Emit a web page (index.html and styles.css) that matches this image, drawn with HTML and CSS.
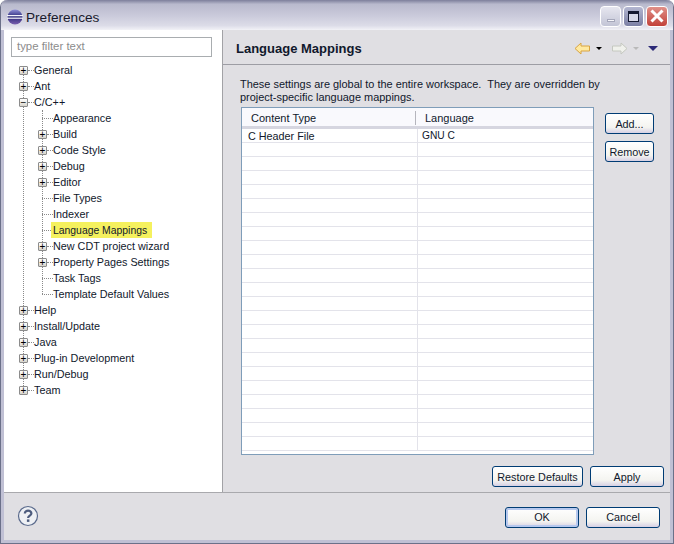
FILE: index.html
```html
<!DOCTYPE html>
<html lang="en">
<head>
<meta charset="utf-8">
<title>Preferences</title>
<link rel="stylesheet" href="styles.css">
</head>
<body>
<div class="window">
  <header class="titlebar">
    <svg class="app-icon" width="16" height="16" viewBox="0 0 16 16">
      <defs><linearGradient id="eg" x1="0" y1="0" x2="0" y2="1"><stop offset="0" stop-color="#8f8fd8"/><stop offset="0.5" stop-color="#2c2a78"/><stop offset="1" stop-color="#7a5fb0"/></linearGradient></defs>
      <circle cx="8" cy="8" r="7.5" fill="url(#eg)"/>
      <rect x="0" y="6" width="16" height="1.2" fill="#f4f4fb"/>
      <rect x="0" y="8.6" width="16" height="1.2" fill="#f4f4fb"/>
    </svg>
    <span class="title-text">Preferences</span>
    <div class="win-buttons">
      <div class="wb wb-min"><span class="min-bar"></span></div>
      <div class="wb wb-max"><span class="max-box"></span></div>
      <div class="wb wb-close">
        <svg width="16" height="16" viewBox="0 0 16 16"><path d="M2.5 2.5L13.5 13.5M13.5 2.5L2.5 13.5" stroke="#fff" stroke-width="3"/></svg>
      </div>
    </div>
  </header>
  <div class="main">
    <aside class="left">
      <div class="filter">type filter text</div>
      <ul class="tree">
        <li class="row"><span class="exp">+</span><span class="twig"></span><span class="lbl">General</span></li>
        <li class="row"><span class="exp">+</span><span class="twig"></span><span class="lbl">Ant</span></li>
        <li class="row"><span class="exp">−</span><span class="twig"></span><span class="lbl">C/C++</span></li>
        <li class="group">
          <ul class="sub">
            <li class="row"><span class="leaf"></span><span class="lbl">Appearance</span></li>
            <li class="row"><span class="exp">+</span><span class="twig"></span><span class="lbl">Build</span></li>
            <li class="row"><span class="exp">+</span><span class="twig"></span><span class="lbl">Code Style</span></li>
            <li class="row"><span class="exp">+</span><span class="twig"></span><span class="lbl">Debug</span></li>
            <li class="row"><span class="exp">+</span><span class="twig"></span><span class="lbl">Editor</span></li>
            <li class="row"><span class="leaf"></span><span class="lbl">File Types</span></li>
            <li class="row"><span class="leaf"></span><span class="lbl">Indexer</span></li>
            <li class="row"><span class="leaf"></span><span class="lbl sel">Language Mappings</span></li>
            <li class="row"><span class="exp">+</span><span class="twig"></span><span class="lbl">New CDT project wizard</span></li>
            <li class="row"><span class="exp">+</span><span class="twig"></span><span class="lbl">Property Pages Settings</span></li>
            <li class="row"><span class="leaf"></span><span class="lbl">Task Tags</span></li>
            <li class="row"><span class="leaf"></span><span class="lbl">Template Default Values</span></li>
          </ul>
        </li>
        <li class="row"><span class="exp">+</span><span class="twig"></span><span class="lbl">Help</span></li>
        <li class="row"><span class="exp">+</span><span class="twig"></span><span class="lbl">Install/Update</span></li>
        <li class="row"><span class="exp">+</span><span class="twig"></span><span class="lbl">Java</span></li>
        <li class="row"><span class="exp">+</span><span class="twig"></span><span class="lbl">Plug-in Development</span></li>
        <li class="row"><span class="exp">+</span><span class="twig"></span><span class="lbl">Run/Debug</span></li>
        <li class="row"><span class="exp">+</span><span class="twig"></span><span class="lbl">Team</span></li>
      </ul>
    </aside>
    <section class="right">
      <div class="page-head">
        <h1 class="page-title">Language Mappings</h1>
        <div class="nav">
          <svg width="17" height="13" viewBox="0 0 17 13"><path d="M1 6.5L7 1V4H15.5V9H7V12Z" fill="#ffe9a0" stroke="#d9a441"/></svg>
          <span class="tri tri-black"></span>
          <svg class="nav-fwd" width="17" height="13" viewBox="0 0 17 13"><path d="M16 6.5L10 1V4H1.5V9H10V12Z" fill="#f0f1ec" stroke="#c5c8c0"/></svg>
          <span class="tri tri-grey"></span>
          <span class="tri tri-menu"></span>
        </div>
      </div>
      <div class="page-body">
        <p class="desc">These settings are global to the entire workspace.&nbsp; They are overridden by<br>project-specific language mappings.</p>
        <div class="content">
          <div class="table">
            <div class="thead"><span class="th th1">Content Type</span><span class="th th2">Language</span></div>
            <div class="tr"><span class="td1">C Header File</span><span class="td2">GNU C</span></div>
            <div class="tr"><span class="td1"></span><span class="td2"></span></div>
            <div class="tr"><span class="td1"></span><span class="td2"></span></div>
            <div class="tr"><span class="td1"></span><span class="td2"></span></div>
            <div class="tr"><span class="td1"></span><span class="td2"></span></div>
            <div class="tr"><span class="td1"></span><span class="td2"></span></div>
            <div class="tr"><span class="td1"></span><span class="td2"></span></div>
            <div class="tr"><span class="td1"></span><span class="td2"></span></div>
            <div class="tr"><span class="td1"></span><span class="td2"></span></div>
            <div class="tr"><span class="td1"></span><span class="td2"></span></div>
            <div class="tr"><span class="td1"></span><span class="td2"></span></div>
            <div class="tr"><span class="td1"></span><span class="td2"></span></div>
            <div class="tr"><span class="td1"></span><span class="td2"></span></div>
            <div class="tr"><span class="td1"></span><span class="td2"></span></div>
            <div class="tr"><span class="td1"></span><span class="td2"></span></div>
            <div class="tr"><span class="td1"></span><span class="td2"></span></div>
            <div class="tr"><span class="td1"></span><span class="td2"></span></div>
            <div class="tr"><span class="td1"></span><span class="td2"></span></div>
            <div class="tr"><span class="td1"></span><span class="td2"></span></div>
            <div class="tr"><span class="td1"></span><span class="td2"></span></div>
            <div class="tr"><span class="td1"></span><span class="td2"></span></div>
            <div class="tr"><span class="td1"></span><span class="td2"></span></div>
            <div class="tr"><span class="td1"></span><span class="td2"></span></div>
          </div>
          <div class="side-btns">
            <button class="btn btn-side">Add...</button>
            <button class="btn btn-side">Remove</button>
          </div>
        </div>
        <div class="page-btns">
          <button class="btn btn-restore">Restore Defaults</button>
          <button class="btn btn-wide">Apply</button>
        </div>
      </div>
    </section>
  </div>
  <footer class="footer">
    <svg class="help" width="22" height="22" viewBox="0 0 22 22">
      <circle cx="11" cy="11" r="9.5" fill="#eef0f4" stroke="#5a6a8c" stroke-width="1.2"/>
      <path d="M7.8 8.4C7.8 4.8 14.4 4.8 14.4 8.4C14.4 10.6 11.1 10.6 11.1 13" fill="none" stroke="#4d5c7e" stroke-width="2.2"/>
      <rect x="9.9" y="14.4" width="2.5" height="2.5" fill="#4d5c7e"/>
    </svg>
    <div class="foot-btns">
      <button class="btn btn-wide btn-default">OK</button>
      <button class="btn btn-wide">Cancel</button>
    </div>
  </footer>
</div>
</body>
</html>
```
FILE: styles.css
```css
* { box-sizing: border-box; }
html, body { margin: 0; padding: 0; }
body { width: 674px; height: 544px; overflow: hidden; font-family: "Liberation Sans", Arial, sans-serif; font-size: 10.8px; color: #10182c; }
.window { width: 674px; height: 544px; display: flex; flex-direction: column; background: #e0dfe3; border: solid #6b7089; border-width: 0 1px 1px; box-shadow: inset 0 0 0 3px #c0c0d4; padding: 0 3px 3px; border-radius: 7px 7px 0 0; }
.titlebar { flex: none; height: 30px; margin: 0 -3px; padding: 3px 5px 0 6px; display: flex; align-items: center; gap: 1px; background: linear-gradient(#7d7f9b 0, #b9bacd 14%, #c9c9da 50%, #dcdce8 85%, #f2f2f7 100%); border-radius: 7px 7px 0 0; }
.app-icon { margin-right: 2px; }
.title-text { font-size: 13.6px; color: #1a1a2c; line-height: 28px; padding-top: 2px; }
.win-buttons { margin-left: auto; display: flex; gap: 2px; padding-bottom: 1px; }
.wb { width: 21px; height: 21px; border-radius: 4px; border: 1px solid #fff; display: flex; align-items: center; justify-content: center; }
.wb-min { background: linear-gradient(#e6e6ef, #c3c5d6); }
.min-bar { width: 8px; height: 3px; margin-top: 9px; background: #f7f7fb; border: 1px solid #a5a7ba; }
.wb-max { background: linear-gradient(#b3b6d0, #7b7fa4); }
.max-box { width: 11px; height: 11px; border: 1px solid #141830; border-top-width: 3px; background: #d7d8e8; }
.wb-close { background: linear-gradient(#e09088, #c2413a); width: 22px; }
.main { flex: 1; display: flex; min-height: 0; border-bottom: 1px solid #a9a9ad; }
.left { flex: none; width: 219px; background: #fff; border-right: 1px solid #a2a2a6; padding: 7px 0 0 7px; }
.filter { width: 201px; height: 20px; border: 1px solid #a9adb0; padding: 0 4px 0 5px; font-size: 11.4px; line-height: 17px; color: #8c8c8c; background: #fff; }
.tree, .sub { list-style: none; margin: 0; padding: 0; position: relative; }
.tree { margin: 5px 0 0 6px; }
.sub { padding-left: 19px; }
.tree::before { content: ""; position: absolute; left: 6px; top: 8px; bottom: 8px; border-left: 1px dotted #8a8a8a; }
.sub::before { content: ""; position: absolute; left: 25px; top: 0; bottom: 8px; border-left: 1px dotted #8a8a8a; }
.row { height: 16px; display: flex; align-items: center; }
.exp { flex: none; position: relative; width: 9px; height: 9px; margin-left: 2px; border: 1px solid #8c8c8c; border-radius: 1px; background: linear-gradient(#fff, #d8d5cc); font-size: 10px; line-height: 7px; text-align: center; color: #000; overflow: hidden; }
.twig { flex: none; width: 6px; border-top: 1px dotted #8a8a8a; }
.leaf { flex: none; width: 11px; height: 1px; margin-left: 6px; border-top: 1px dotted #8a8a8a; }
.lbl { white-space: nowrap; line-height: 15px; }
.sel { background: #f5f15e; padding: 1px 5px 0 2px; margin-left: -2px; font-size: 10.4px; }
.right { flex: 1; min-width: 0; display: flex; flex-direction: column; }
.page-head { flex: none; height: 35px; display: flex; align-items: center; justify-content: space-between; padding: 2px 12px 0 13px; border-bottom: 1px solid #9d9da4; }
.page-title { margin: 0; font-size: 13px; font-weight: 700; color: #10182c; }
.nav { display: flex; align-items: center; }
.tri { width: 0; height: 0; border-style: solid; border-color: transparent; border-width: 3px 3px 0; margin-left: 5px; }
.tri-black { border-top-color: #000; }
.tri-grey { border-top-color: #b9b9b9; }
.tri-menu { border-width: 5px 5px 0; border-top-color: #2c2a78; margin-left: 9px; }
.nav-fwd { margin-left: 9px; }
.page-body { flex: 1; padding: 13px 6px 0 17px; display: flex; flex-direction: column; }
.desc { margin: 0; line-height: 13px; font-size: 10.95px; }
.content { display: flex; margin-top: 3px; margin-left: 1px; }
.table { width: 353px; height: 348px; border: 1px solid #7f9db9; background: #fff; overflow: hidden; }
.thead { height: 21px; display: flex; align-items: center; background: #f9f9fd; border-bottom: 3px solid #d6d6e0; padding-top: 1px; }
.th { line-height: 14px; font-size: 11px; }
.th1 { width: 174px; padding-left: 9px; border-right: 1px solid #b5b5bd; }
.th2 { padding-left: 9px; }
.tr { height: 14px; display: flex; border-bottom: 1px solid #e3e3ea; line-height: 14px; }
.td1 { width: 176px; padding-left: 6px; border-right: 1px solid #e3e3ea; }
.td2 { padding-left: 4px; font-size: 10.2px; }
.side-btns { margin-left: 11px; padding-top: 6px; display: flex; flex-direction: column; gap: 7px; }
.btn { font: inherit; color: #10182c; height: 21px; padding: 0; border: 1px solid #003c74; border-radius: 3px; background: linear-gradient(#fff, #f4f4f0 70%, #d6d0e4); white-space: nowrap; }
.btn-side { width: 49px; }
.page-btns { display: flex; justify-content: flex-end; gap: 7px; margin-top: 11px; }
.btn-restore { width: 91px; }
.btn-wide { width: 74px; }
.footer { flex: none; height: 47px; display: flex; align-items: center; justify-content: space-between; padding: 0 10px 0 13px; }
.help { margin-bottom: 2px; }
.foot-btns { display: flex; gap: 7px; padding-top: 1px; }
.btn-default { box-shadow: inset 0 0 0 2px #b6c8ee; }
```
